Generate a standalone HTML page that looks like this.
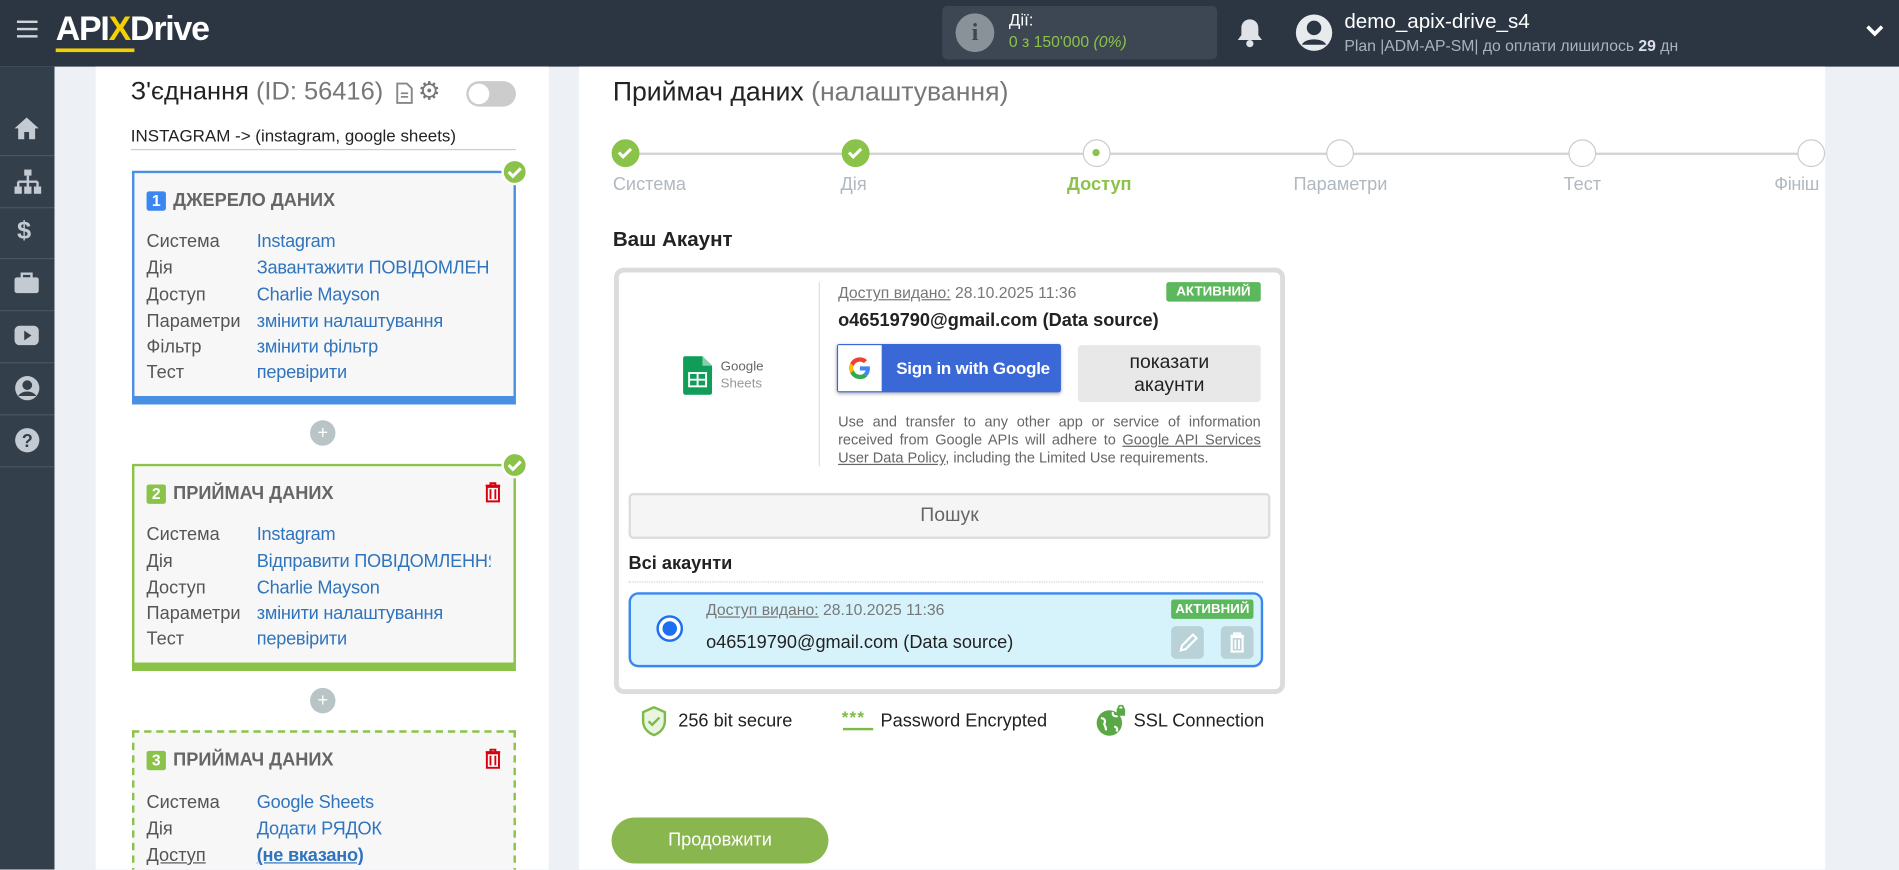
<!DOCTYPE html>
<html><head><meta charset="utf-8"><style>
*{box-sizing:border-box;margin:0;padding:0}
html,body{width:1899px;height:870px;overflow:hidden;background:#edf0f4}
body{font-family:"Liberation Sans","DejaVu Sans",sans-serif}
#w{position:absolute;left:0;top:0;width:1568px;height:718px;transform:scale(1.21110);transform-origin:0 0;background:#edf0f4;overflow:hidden}
.a{position:absolute;white-space:nowrap}
.hdr{position:absolute;left:0;top:0;width:1568px;height:55px;background:#2c3643}
.sb{position:absolute;left:0;top:55px;width:45px;height:663px;background:#343f4c}
.sep{position:absolute;left:0;width:45px;height:1px;background:#4a5562}
.panel{position:absolute;background:#fff}
.card{position:absolute;left:109px;width:317px;background:#f7f7f7}
.lb{position:absolute;left:10px;font-size:15px;color:#555;white-space:nowrap}
.vl{position:absolute;left:101px;font-size:15px;color:#2f74bd;white-space:nowrap;letter-spacing:-0.2px}
.ch{position:absolute;left:10px;font-size:15px;font-weight:bold;color:#666;white-space:nowrap}
.num{display:inline-block;width:16px;height:16px;color:#fff;font-size:13px;text-align:center;line-height:16px;border-radius:2px;margin-right:6px}
.ok{position:absolute;width:22px;height:22px;border-radius:50%;background:#8bc34a;border:2px solid #fff}
.plus{position:absolute;left:256px;width:21px;height:21px;border-radius:50%;background:#b8c4c6;color:#fff;text-align:center;line-height:21px;font-size:15px}
.step{position:absolute;top:115px;width:23px;height:23px;border-radius:50%;background:#fff;border:1.5px solid #ccc}
.sl{position:absolute;top:144px;font-size:15px;color:#b0b8c0;white-space:nowrap}
.badge{position:absolute;background:#5cb85c;color:#fff;font-size:11px;font-weight:bold;text-align:center;border-radius:2px}
.tr{position:absolute;left:289px;top:13px}
</style></head><body><div id="w">
<div class="hdr"></div>
<div class="a" style="left:14px;top:17px;width:17px;height:2px;background:#cfd4da;box-shadow:0 6px 0 #cfd4da,0 12px 0 #cfd4da"></div>
<div class="a" style="left:46px;top:8px;font-size:28px;font-weight:bold;color:#fff;letter-spacing:-1px">API<span style="color:#f5d000">X</span>Drive</div>
<div class="a" style="left:46px;top:40px;width:65px;height:3px;background:#f5d000"></div>
<div class="a" style="left:778px;top:5px;width:227px;height:44px;background:#3c4753;border-radius:4px"></div>
<div class="a" style="left:789px;top:11px;width:32px;height:32px;border-radius:50%;background:#8a9299;color:#3c4753;font-weight:bold;font-size:20px;text-align:center;line-height:32px;font-family:'Liberation Serif',serif">i</div>
<div class="a" style="left:833px;top:8px;font-size:14px;color:#fff">Дії:</div>
<div class="a" style="left:833px;top:27px;font-size:13px;color:#8bc34a">0 з 150'000 <i>(0%)</i></div>
<svg class="a" style="left:1021px;top:14px" width="22" height="26" viewBox="0 0 22 26"><path d="M11 2c-4 0-7 3-7 7v6l-3 4h20l-3-4V9c0-4-3-7-7-7z" fill="#dfe3e7"/><circle cx="11" cy="22" r="3" fill="#dfe3e7"/></svg>
<svg class="a" style="left:1069px;top:11px" width="32" height="32" viewBox="0 0 32 32"><circle cx="16" cy="16" r="15" fill="#e8ebee"/><circle cx="16" cy="12" r="6" fill="#2c3643"/><path d="M6 26c2-6 18-6 20 0" fill="#2c3643"/></svg>
<div class="a" style="left:1110px;top:8px;font-size:17px;color:#fff">demo_apix-drive_s4</div>
<div class="a" style="left:1110px;top:30px;font-size:13px;color:#aab3bd">Plan |ADM-AP-SM| до оплати лишилось <b style="color:#dde">29</b> дн</div>
<svg class="a" style="left:1541px;top:20px" width="14" height="12" viewBox="0 0 14 12"><path d="M1 2l6 6 6-6" stroke="#fff" stroke-width="3" fill="none"/></svg>
<div class="sb"></div>
<div class="sep" style="top:128px"></div><div class="sep" style="top:171px"></div><div class="sep" style="top:213px"></div><div class="sep" style="top:256px"></div><div class="sep" style="top:299px"></div><div class="sep" style="top:342px"></div><div class="sep" style="top:385px"></div>
<svg class="a" style="left:11px;top:96px" width="22" height="20"><path d="M11 1L1 10h3v9h5v-6h4v6h5v-9h3z" fill="#c3cad2"/></svg>
<svg class="a" style="left:11px;top:139px" width="24" height="22"><rect x="9" y="1" width="6" height="5" fill="#c3cad2"/><path d="M12 6v5M4 11h16M4 11v4M12 11v4M20 11v4" stroke="#c3cad2" stroke-width="2"/><rect x="1" y="15" width="6" height="6" fill="#c3cad2"/><rect x="9" y="15" width="6" height="6" fill="#c3cad2"/><rect x="17" y="15" width="6" height="6" fill="#c3cad2"/></svg>
<div class="a" style="left:14px;top:179px;font-size:21px;font-weight:bold;color:#c3cad2">$</div>
<svg class="a" style="left:11px;top:225px" width="22" height="18"><rect x="1" y="4" width="20" height="13" rx="2" fill="#c3cad2"/><rect x="7" y="1" width="8" height="4" fill="none" stroke="#c3cad2" stroke-width="2"/></svg>
<svg class="a" style="left:11px;top:268px" width="22" height="18"><rect x="1" y="1" width="20" height="16" rx="4" fill="#c3cad2"/><path d="M9 5l6 4-6 4z" fill="#343f4c"/></svg>
<svg class="a" style="left:12px;top:310px" width="21" height="21"><circle cx="10.5" cy="10.5" r="10" fill="#c3cad2"/><circle cx="10.5" cy="8" r="4" fill="#343f4c"/><path d="M3 17c3-5 12-5 15 0" fill="#343f4c"/></svg>
<svg class="a" style="left:12px;top:353px" width="21" height="21"><circle cx="10.5" cy="10.5" r="10" fill="#c3cad2"/><text x="10.5" y="16" font-size="15" font-weight="bold" text-anchor="middle" fill="#343f4c" font-family="Liberation Sans">?</text></svg>

<div class="panel" style="left:79px;top:55px;width:374px;height:663px"></div>
<div class="a" style="left:108px;top:64px;font-size:21px;color:#222">З'єднання <span style="color:#777">(ID: 56416)</span></div>
<svg class="a" style="left:327px;top:68px" width="14" height="18"><path d="M1 1h8l4 4v12H1z" fill="none" stroke="#888" stroke-width="1.6"/><path d="M4 9h6M4 12h6" stroke="#888" stroke-width="1.5"/></svg>
<div class="a" style="left:345px;top:63px;font-size:21px;color:#777">⚙</div>
<div class="a" style="left:385px;top:67px;width:41px;height:21px;border-radius:11px;background:#ccc"><div style="position:absolute;left:2px;top:2px;width:17px;height:17px;border-radius:50%;background:#fff"></div></div>
<div class="a" style="left:108px;top:104px;font-size:14px;color:#222">INSTAGRAM -&gt; (instagram, google sheets)</div>
<div class="a" style="left:108px;top:123px;width:318px;height:1px;background:#ccc"></div>

<div class="card" style="top:141px;height:193px;border:2px solid #4a90e2;border-bottom:7px solid #4a90e2">
<div class="ch" style="top:14px"><span class="num" style="background:#3b86f0">1</span>ДЖЕРЕЛО ДАНИХ</div>
<div class="lb" style="top:48px">Система</div><div class="vl" style="top:48px">Instagram</div>
<div class="lb" style="top:70px">Дія</div><div class="vl" style="top:70px;width:193px;overflow:hidden">Завантажити ПОВІДОМЛЕННЯ</div>
<div class="lb" style="top:92px">Доступ</div><div class="vl" style="top:92px">Charlie Mayson</div>
<div class="lb" style="top:114px">Параметри</div><div class="vl" style="top:114px">змінити налаштування</div>
<div class="lb" style="top:135px">Фільтр</div><div class="vl" style="top:135px">змінити фільтр</div>
<div class="lb" style="top:156px">Тест</div><div class="vl" style="top:156px">перевірити</div>
</div>
<div class="ok" style="left:414px;top:131px"><svg width="18" height="18" style="position:absolute;left:0;top:0"><path d="M4 9l3.5 3.5L14 6" stroke="#fff" stroke-width="2.5" fill="none"/></svg></div>
<div class="plus" style="top:347px">+</div>

<div class="card" style="top:383px;height:171px;border:2px solid #8bc34a;border-bottom:7px solid #8bc34a">
<div class="ch" style="top:14px"><span class="num" style="background:#8bc34a">2</span>ПРИЙМАЧ ДАНИХ</div>
<svg class="tr" width="14" height="17" viewBox="0 0 14 17"><path d="M1 3h12M5 3V1h4v2M2 4h10v12H2z" fill="none" stroke="#d9000d" stroke-width="1.6"/><path d="M5 6v8M9 6v8" stroke="#d9000d" stroke-width="1.5"/></svg>
<div class="lb" style="top:48px">Система</div><div class="vl" style="top:48px">Instagram</div>
<div class="lb" style="top:70px">Дія</div><div class="vl" style="top:70px;width:193px;overflow:hidden">Відправити ПОВІДОМЛЕННЯ</div>
<div class="lb" style="top:92px">Доступ</div><div class="vl" style="top:92px">Charlie Mayson</div>
<div class="lb" style="top:113px">Параметри</div><div class="vl" style="top:113px">змінити налаштування</div>
<div class="lb" style="top:134px">Тест</div><div class="vl" style="top:134px">перевірити</div>
</div>
<div class="ok" style="left:414px;top:373px"><svg width="18" height="18" style="position:absolute;left:0;top:0"><path d="M4 9l3.5 3.5L14 6" stroke="#fff" stroke-width="2.5" fill="none"/></svg></div>
<div class="plus" style="top:568px">+</div>

<div class="card" style="top:603px;height:130px;border:2px dashed #8bc34a">
<div class="ch" style="top:14px"><span class="num" style="background:#8bc34a">3</span>ПРИЙМАЧ ДАНИХ</div>
<svg class="tr" width="14" height="17" viewBox="0 0 14 17"><path d="M1 3h12M5 3V1h4v2M2 4h10v12H2z" fill="none" stroke="#d9000d" stroke-width="1.6"/><path d="M5 6v8M9 6v8" stroke="#d9000d" stroke-width="1.5"/></svg>
<div class="lb" style="top:49px">Система</div><div class="vl" style="top:49px">Google Sheets</div>
<div class="lb" style="top:71px">Дія</div><div class="vl" style="top:71px">Додати РЯДОК</div>
<div class="lb" style="top:93px;text-decoration:underline">Доступ</div><div class="vl" style="top:93px;font-weight:bold;text-decoration:underline">(не вказано)</div>
</div>

<div class="panel" style="left:478px;top:55px;width:1029px;height:663px"></div>
<div class="a" style="left:506px;top:63px;font-size:22px;color:#222">Приймач даних <span style="color:#777">(налаштування)</span></div>
<div class="a" style="left:516px;top:126px;width:980px;height:1.5px;background:#d5d5d5"></div>
<div class="step" style="left:505px;background:#8bc34a;border-color:#8bc34a"><svg width="20" height="20"><path d="M5 10l3.5 3.5L15 7" stroke="#fff" stroke-width="2.5" fill="none"/></svg></div>
<div class="step" style="left:695px;background:#8bc34a;border-color:#8bc34a"><svg width="20" height="20"><path d="M5 10l3.5 3.5L15 7" stroke="#fff" stroke-width="2.5" fill="none"/></svg></div>
<div class="step" style="left:894px"><div style="position:absolute;left:7px;top:7px;width:6px;height:6px;border-radius:50%;background:#8bc34a"></div></div>
<div class="step" style="left:1095px"></div>
<div class="step" style="left:1295px"></div>
<div class="step" style="left:1484px"></div>
<div class="sl" style="left:506px">Система</div>
<div class="sl" style="left:694px">Дія</div>
<div class="sl" style="left:881px;color:#8bc34a;font-weight:bold">Доступ</div>
<div class="sl" style="left:1068px">Параметри</div>
<div class="sl" style="left:1291px">Тест</div>
<div class="sl" style="left:1465px;letter-spacing:-0.3px">Фініш</div>
<div class="a" style="left:506px;top:188px;font-size:17px;font-weight:bold;color:#222">Ваш Акаунт</div>

<div class="a" style="left:507px;top:221px;width:554px;height:352px;border:4px solid #dcdcdc;border-radius:8px;background:#fff"></div>
<svg class="a" style="left:564px;top:294px" width="24" height="32" viewBox="0 0 24 32"><path d="M2 0h14l8 8v22a2 2 0 0 1-2 2H2a2 2 0 0 1-2-2V2a2 2 0 0 1 2-2z" fill="#0f9d58"/><path d="M16 0v8h8z" fill="#87ceac"/><rect x="5" y="14" width="14" height="11" fill="none" stroke="#fff" stroke-width="1.6"/><path d="M5 19.5h14M12 14v11" stroke="#fff" stroke-width="1.6"/></svg>
<div class="a" style="left:595px;top:296px;font-size:11px;color:#666;line-height:14px">Google<br><span style="color:#999">Sheets</span></div>
<div class="a" style="left:676px;top:233px;width:1px;height:152px;background:#ddd"></div>
<div class="a" style="left:692px;top:234px;font-size:13px;color:#777"><u>Доступ видано:</u> 28.10.2025 11:36</div>
<div class="badge" style="left:963px;top:233px;width:78px;height:16px;line-height:16px">АКТИВНИЙ</div>
<div class="a" style="left:692px;top:256px;font-size:15px;font-weight:bold;color:#222">o46519790@gmail.com (Data source)</div>
<div class="a" style="left:691px;top:284px;width:185px;height:40px;background:#3a68d6;border-radius:2px;box-shadow:0 1px 3px rgba(0,0,0,.3)">
<div style="position:absolute;left:1px;top:1px;width:36px;height:38px;background:#fff"></div>
<svg style="position:absolute;left:10px;top:11px" width="18" height="18" viewBox="0 0 48 48"><path fill="#EA4335" d="M24 9.5c3.5 0 6.6 1.2 9 3.5l6.7-6.7C35.6 2.4 30.2 0 24 0 14.6 0 6.6 5.4 2.7 13.3l7.8 6C12.4 13.7 17.7 9.5 24 9.5z"/><path fill="#4285F4" d="M46.1 24.5c0-1.6-.1-3.1-.4-4.5H24v9h12.4c-.5 2.9-2.2 5.4-4.7 7l7.6 5.9c4.4-4.1 6.8-10.1 6.8-17.4z"/><path fill="#FBBC05" d="M10.5 28.7c-.5-1.4-.8-3-.8-4.7s.3-3.2.8-4.7l-7.8-6C1 16.6 0 20.2 0 24s1 7.4 2.7 10.7z"/><path fill="#34A853" d="M24 48c6.5 0 11.9-2.1 15.9-5.8l-7.6-5.9c-2.1 1.4-4.9 2.3-8.3 2.3-6.3 0-11.6-4.2-13.5-9.9l-7.8 6C6.6 42.6 14.6 48 24 48z"/></svg>
<div style="position:absolute;left:49px;top:12px;color:#fff;font-size:14px;font-weight:bold;letter-spacing:-0.2px">Sign in with Google</div></div>
<div class="a" style="left:890px;top:285px;width:151px;height:47px;background:#e8e8e8;border-radius:3px;font-size:16px;color:#222;text-align:center;line-height:19px;padding-top:5px">показати<br>акаунти</div>
<div class="a" style="left:692px;top:341px;width:349px;font-size:12px;color:#666;line-height:15px;white-space:normal;text-align:justify">Use and transfer to any other app or service of information received from Google APIs will adhere to <u>Google API Services User Data Policy</u>, including the Limited Use requirements.</div>
<div class="a" style="left:519px;top:407px;width:530px;height:38px;background:#f5f5f5;border:2px solid #ddd;border-radius:4px;text-align:center;line-height:34px;font-size:16px;color:#666">Пошук</div>
<div class="a" style="left:519px;top:457px;font-size:15px;font-weight:bold;color:#222">Всі акаунти</div>
<div class="a" style="left:519px;top:480px;width:524px;border-top:1px dotted #ccc"></div>
<div class="a" style="left:519px;top:489px;width:524px;height:62px;background:#d6f3fc;border:2px solid #3b86f0;border-radius:8px"></div>
<div class="a" style="left:542px;top:508px;width:22px;height:22px;border-radius:50%;border:2px solid #1b6ff0;background:#fff"><div style="position:absolute;left:3px;top:3px;width:12px;height:12px;border-radius:50%;background:#1b6ff0"></div></div>
<div class="a" style="left:583px;top:496px;font-size:13px;color:#777"><u>Доступ видано:</u> 28.10.2025 11:36</div>
<div class="a" style="left:583px;top:522px;font-size:15px;color:#222">o46519790@gmail.com (Data source)</div>
<div class="badge" style="left:967px;top:495px;width:68px;height:16px;line-height:16px">АКТИВНИЙ</div>
<div class="a" style="left:967px;top:517px;width:27px;height:27px;background:#b8d2d8;border-radius:4px"><svg width="27" height="27"><path d="M8 20l1-4 9-9 3 3-9 9z" fill="none" stroke="#fff" stroke-width="1.8"/></svg></div>
<div class="a" style="left:1008px;top:517px;width:27px;height:27px;background:#b8d2d8;border-radius:4px"><svg width="27" height="27"><path d="M8 8h11M11 8V6h5v2M9 9h9v12H9z" fill="none" stroke="#fff" stroke-width="1.8"/><path d="M12 11v8M15 11v8" stroke="#fff" stroke-width="1.5"/></svg></div>

<svg class="a" style="left:529px;top:583px" width="22" height="25" viewBox="0 0 22 25"><path d="M11 1L2 5v7c0 6 4 10 9 12 5-2 9-6 9-12V5z" fill="#eaf5e0" stroke="#7cba4a" stroke-width="2"/><path d="M6.5 12.5l3 3 6-6" stroke="#7cba4a" stroke-width="2" fill="none"/></svg>
<div class="a" style="left:560px;top:587px;font-size:15px;color:#222">256 bit secure</div>
<div class="a" style="left:695px;top:584px;font-size:14px;font-weight:bold;color:#7cba4a;letter-spacing:1px">***</div>
<div class="a" style="left:696px;top:601px;width:25px;height:2px;background:#7cba4a"></div>
<div class="a" style="left:727px;top:587px;font-size:15px;color:#222">Password Encrypted</div>
<svg class="a" style="left:905px;top:582px" width="26" height="27" viewBox="0 0 26 27"><circle cx="11" cy="15" r="10.5" fill="#5aa845"/><path d="M4 11c3 0 4 2 3 4s2 3 1 6M14 6c-1 3 2 4 4 3M15 18c2 0 3 2 2 4" stroke="#fff" stroke-width="1.8" fill="none"/><rect x="17" y="3" width="7" height="6" fill="#5aa845"/><path d="M18.5 3.5v-1a2 2 0 0 1 4 0v1" stroke="#5aa845" stroke-width="1.5" fill="none"/></svg>
<div class="a" style="left:936px;top:587px;font-size:15px;color:#222">SSL Connection</div>
<div class="a" style="left:505px;top:675px;width:179px;height:38px;background:#8ab64f;border-radius:19px;color:#fff;text-align:center;line-height:38px;font-size:15px">Продовжити</div>
</div></body></html>
